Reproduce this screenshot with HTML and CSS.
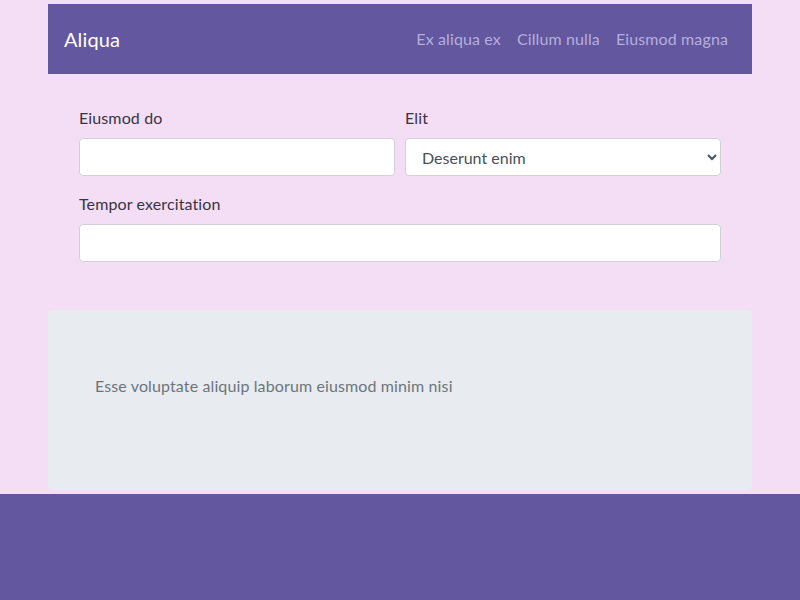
FILE: index.html
```html
<!DOCTYPE html>
<html>
<head>
<meta charset="utf-8">
<link rel="stylesheet" href="styles.css">
</head>
<body>
<div class="page">
  <div class="container">
    <nav class="navbar">
      <span class="brand">Aliqua</span>
      <div class="nav-links">
        <a href="#">Ex aliqua ex</a>
        <a href="#">Cillum nulla</a>
        <a href="#">Eiusmod magna</a>
      </div>
    </nav>
    <form class="form">
      <div class="row">
        <div class="field">
          <label>Eiusmod do</label>
          <input type="text" class="control">
        </div>
        <div class="field">
          <label>Elit</label>
          <select class="control select">
            <option>Deserunt enim</option>
          </select>
        </div>
      </div>
      <div class="field">
        <label>Tempor exercitation</label>
        <input type="text" class="control">
      </div>
    </form>
    <section class="panel">
      <p>Esse voluptate aliquip laborum eiusmod minim nisi</p>
    </section>
  </div>
  <footer class="footer"></footer>
</div>
</body>
</html>
```

FILE: styles.css
```css
* { box-sizing: border-box; }
html, body { margin: 0; padding: 0; }
body {
  background: #f3def6;
  font-family: Lato, "Noto Sans", sans-serif;
  font-size: 16px;
  line-height: 24px;
  letter-spacing: 0.12px;
  color: #3a3442;
}
.page {
  min-height: 600px;
  display: flex;
  flex-direction: column;
  padding-top: 4px;
}
.container {
  width: 704px;
  margin: 0 auto;
}
.navbar {
  height: 70px;
  background: #63579f;
  display: flex;
  align-items: center;
  justify-content: space-between;
  padding: 0 24px 0 16px;
}
.brand {
  color: #ffffff;
  font-size: 20px;
}
.nav-links {
  display: flex;
  gap: 16px;
}
.nav-links a {
  color: #b5aedb;
  text-decoration: none;
  font-size: 16px;
}
.form {
  padding: 32px 31px 0;
  display: flex;
  flex-direction: column;
  gap: 16px;
}
.row {
  display: flex;
  gap: 10px;
}
.row .field { flex: 1; }
.field {
  display: flex;
  flex-direction: column;
  gap: 8px;
}
.field label {
  display: block;
  font-weight: 400;
}
.control {
  height: 38px;
  width: 100%;
  background: #ffffff;
  border: 1px solid #d3d0db;
  border-radius: 4px;
  font: inherit;
  color: #495057;
  padding: 0 12px;
}
.panel {
  margin-top: 48px;
  height: 180px;
  background: #e8ebef;
  border-radius: 4px;
  padding: 64px 47px 0;
}
.panel p {
  margin: 0;
  color: #6c757d;
}
.footer {
  margin-top: 4px;
  flex: 1;
  background: #63579f;
}
```
